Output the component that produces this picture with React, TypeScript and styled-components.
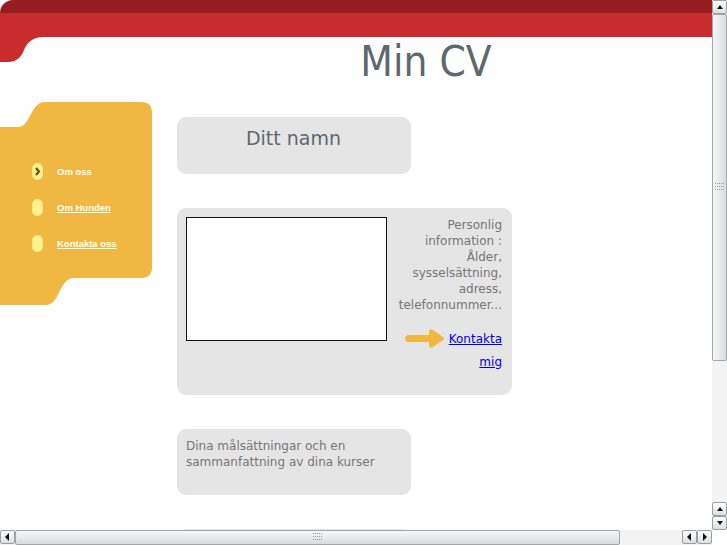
import React from 'react'
import styled, { createGlobalStyle } from 'styled-components'

const GlobalStyle = createGlobalStyle`
  html, body {
    margin: 0;
    padding: 0;
    overflow: hidden;
    background: #fff;
  }
  body {
    font-family: "DejaVu Sans", sans-serif;
  }
`

const Window = styled.div`
  width: 727px;
  height: 545px;
  display: grid;
  grid-template-columns: 712px 15px;
  grid-template-rows: 530px 15px;
  overflow: hidden;
`

const Viewport = styled.div`
  position: relative;
  overflow: hidden;
  background: #fff;
`

/* header bands */
const TopBand = styled.div`
  height: 13px;
  background: #951d1f;
  border-top-left-radius: 13px;
`

const RedBand = styled.div`
  height: 24px;
  background: #c92c2e;
`

const Lobe = styled.svg`
  position: absolute;
  left: 0;
  top: 37px;
`

const Title = styled.h1`
  margin: 0;
  padding-left: 140px;
  text-align: center;
  font-family: "DejaVu Sans Condensed", "DejaVu Sans", sans-serif;
  font-stretch: condensed;
  font-weight: normal;
  font-size: 42px;
  line-height: normal;
  color: #5f686c;
`

const Columns = styled.div`
  display: flex;
  align-items: flex-start;
  gap: 25px;
  margin-top: 16px;
`

/* sidebar */
const Sidebar = styled.nav`
  position: relative;
  width: 152px;
  height: 203px;
  box-sizing: border-box;
  padding: 51px 0 0 32px;
`

const SidebarShape = styled.svg`
  position: absolute;
  left: 0;
  top: 0;
  z-index: 0;
`

const NavList = styled.ul`
  position: relative;
  z-index: 1;
  list-style: none;
  margin: 0;
  padding: 0;
`

const NavItem = styled.li`
  display: flex;
  align-items: center;
  gap: 14px;
  height: 36px;
`

const Bullet = styled.span`
  display: flex;
  align-items: center;
  justify-content: center;
  width: 11px;
  height: 17px;
  box-sizing: border-box;
  border-radius: 5px;
  background: #fff38e;
  border: 1px solid #fbe47a;
`

const NavLink = styled.a<{ $current?: boolean }>`
  font-family: "Liberation Sans", Arial, sans-serif;
  font-weight: bold;
  font-size: 9.5px;
  color: #fff;
  text-decoration: ${(p) => (p.$current ? 'none' : 'underline')};
`

/* main column */
const Main = styled.main`
  display: flex;
  flex-direction: column;
  gap: 34px;
  padding-top: 15px;
`

const Card = styled.section<{ $wide?: boolean; $height: number }>`
  width: ${(p) => (p.$wide ? 335 : 234)}px;
  height: ${(p) => p.$height}px;
  box-sizing: border-box;
  padding: 9px 10px 9px 9px;
  border-radius: 9px;
  background: #e5e5e5;
  color: #777;
  font-size: 12px;
  line-height: 16px;
`

const NameHeading = styled.h2`
  margin: 0;
  padding-top: 1px;
  text-align: center;
  font-weight: normal;
  font-size: 19px;
  line-height: normal;
  color: #5f686c;
`

const InfoRow = styled.div`
  display: flex;
  gap: 6px;
`

const PhotoFrame = styled.div`
  width: 201px;
  height: 124px;
  box-sizing: border-box;
  flex: none;
  border: 1px solid #111;
  background: #fff;
`

const InfoText = styled.div`
  flex: 1;
  text-align: right;
`

const InfoPara = styled.p`
  margin: 0;
`

const ContactPara = styled.p`
  margin: 15px 0 0;
  line-height: 23px;
`

const ContactLink = styled.a`
  color: #0000ee;
  text-decoration: underline;
`

const ArrowIcon = styled.svg`
  vertical-align: -6px;
  margin-right: 4px;
`

const PlainText = styled.p`
  margin: 0;
`

/* fake browser scrollbars */
const VBar = styled.div`
  display: flex;
  flex-direction: column;
  background: #f4f4f4;
`

const HBar = styled.div`
  display: flex;
  background: #f4f4f4;
`

const Corner = styled.div`
  background: #fff;
`

const ArrowButton = styled.div`
  display: flex;
  align-items: center;
  justify-content: center;
  width: 15px;
  height: 14px;
  box-sizing: border-box;
  flex: none;
  border: 1px solid #9b9da1;
  border-radius: 2px;
  background: linear-gradient(#fdfdfd, #dddfe3);
`

const Thumb = styled.div<{ $vertical?: boolean }>`
  display: flex;
  align-items: center;
  justify-content: center;
  box-sizing: border-box;
  flex: none;
  ${(p) => (p.$vertical ? 'width: 15px; height: 347px;' : 'height: 15px; width: 605px;')}
  border: 1px solid #a3a5a9;
  border-radius: 2px;
  background: ${(p) =>
    p.$vertical
      ? 'linear-gradient(to right, #f6f7f9, #d9dbdf)'
      : 'linear-gradient(#f6f7f9, #d9dbdf)'};
`

const Track = styled.div`
  flex: 1;
  background: #f3f3f3;
`

function Tri({ dir }: { dir: 'up' | 'down' | 'left' | 'right' }) {
  const pts = {
    up: '1,5 4,1 7,5',
    down: '1,1 4,5 7,1',
    left: '5,0 1,4 5,8',
    right: '2,0 6,4 2,8',
  }[dir]
  const vert = dir === 'up' || dir === 'down'
  return (
    <svg width={vert ? 8 : 7} height={vert ? 6 : 8}>
      <polygon points={pts} fill="#111" />
    </svg>
  )
}

function Grip() {
  const dots = []
  for (let r = 0; r < 3; r++)
    for (let c = 0; c < 5; c++)
      dots.push(<rect key={`${r}-${c}`} x={c * 2} y={r * 3} width="1" height="1" fill="#9a9ca0" />)
  return <svg width="10" height="9">{dots}</svg>
}

const nav = [
  { label: 'Om oss', current: true },
  { label: 'Om Hunden', current: false },
  { label: 'Kontakta oss', current: false },
]

export default function App() {
  return (
    <>
      <GlobalStyle />
      <Window>
        <Viewport>
          <TopBand />
          <RedBand />
          <Lobe width="48" height="26" viewBox="0 0 48 26">
            <path d="M0,0 H44 C32,0 27,6 24,13 C21,21 16,25 8,25 H0 Z" fill="#c92c2e" />
          </Lobe>
          <Title>Min CV</Title>

          <Columns>
            <Sidebar>
              <SidebarShape width="152" height="203" viewBox="0 0 152 203">
                <path
                  d="M0,25 H18 C31,25 30,0 45,0 H141 Q152,0 152,11 V165 Q152,176 141,176 H74 C59,176 60,203 46,203 H0 Z"
                  fill="#f0b843"
                />
              </SidebarShape>
              <NavList>
                {nav.map((item) => (
                  <NavItem key={item.label}>
                    <Bullet>
                      {item.current && (
                        <svg width="7" height="9" viewBox="0 0 7 9">
                          <path d="M2,1 L5,4.5 L2,8" stroke="#6d4a12" strokeWidth="2.2" fill="none" />
                        </svg>
                      )}
                    </Bullet>
                    <NavLink href="#" $current={item.current}>
                      {item.label}
                    </NavLink>
                  </NavItem>
                ))}
              </NavList>
            </Sidebar>

            <Main>
              <Card $height={57}>
                <NameHeading>Ditt namn</NameHeading>
              </Card>

              <Card $wide $height={187}>
                <InfoRow>
                  <PhotoFrame />
                  <InfoText>
                    <InfoPara>
                      Personlig information : Ålder, sysselsättning, adress, telefonnummer...
                    </InfoPara>
                    <ContactPara>
                      <ArrowIcon width="40" height="21" viewBox="0 0 40 21">
                        <path
                          d="M4,7 H24 L24,3 Q25,0 28,2 L38,9 Q40,10.5 38,12 L28,19 Q25,21 24,18 L24,14 H4 Q0,14 0,10.5 Q0,7 4,7 Z"
                          fill="#f0b843"
                        />
                      </ArrowIcon>
                      <ContactLink href="#">Kontakta mig</ContactLink>
                    </ContactPara>
                  </InfoText>
                </InfoRow>
              </Card>

              <Card $height={66}>
                <PlainText>Dina målsättningar och en sammanfattning av dina kurser</PlainText>
              </Card>

              <Card $height={66} />
            </Main>
          </Columns>
        </Viewport>

        <VBar>
          <ArrowButton>
            <Tri dir="up" />
          </ArrowButton>
          <Thumb $vertical>
            <Grip />
          </Thumb>
          <Track />
          <ArrowButton>
            <Tri dir="up" />
          </ArrowButton>
          <ArrowButton>
            <Tri dir="down" />
          </ArrowButton>
        </VBar>

        <HBar>
          <ArrowButton>
            <Tri dir="left" />
          </ArrowButton>
          <Thumb>
            <Grip />
          </Thumb>
          <Track />
          <ArrowButton>
            <Tri dir="left" />
          </ArrowButton>
          <ArrowButton>
            <Tri dir="right" />
          </ArrowButton>
        </HBar>
        <Corner />
      </Window>
    </>
  )
}
